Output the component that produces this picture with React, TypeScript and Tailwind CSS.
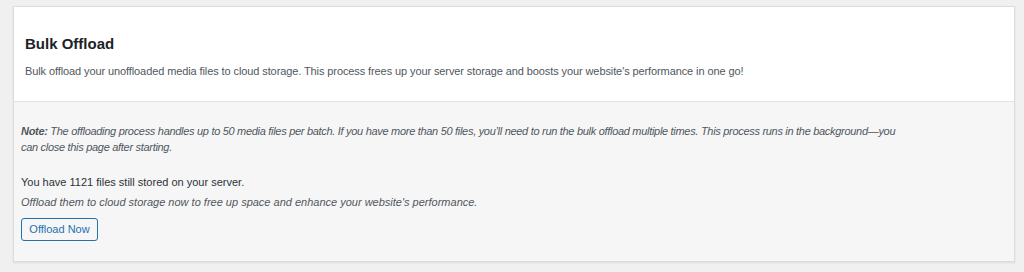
import React from "react";

export default function App() {
  return (
    <div
      className="w-[1024px] h-[272px] bg-[#f0f0f1] pt-[6px] pl-[13px] pr-[9px]"
      style={{ fontFamily: '"Liberation Sans", Arial, sans-serif' }}
    >
      <div className="w-[1002px] h-[256px] border border-[#dcdcde] shadow-[0_1px_2px_rgba(0,0,0,0.08)] flex flex-col">
        <div className="bg-white h-[95px] border-b border-[#e2e2e4] pl-[11px] pt-[27px]">
          <h2 className="text-[15px] font-bold text-[#1d2327] leading-[20px]">Bulk Offload</h2>
          <p className="text-[11px] tracking-[-0.1px] text-[#50575e] leading-[16px] mt-[9px]">
            Bulk offload your unoffloaded media files to cloud storage. This process frees up your server storage and boosts your website's performance in one go!
          </p>
        </div>
        <div className="flex-1 bg-[#f6f6f6] pl-[7px] pt-[21px]">
          <p className="w-[880px] text-[11px] tracking-[-0.3px] italic text-[#50575e] leading-[16px]">
            <b>Note:</b> The offloading process handles up to 50 media files per batch. If you have more than 50 files, you’ll need to run the bulk offload multiple times. This process runs in the background—you can close this page after starting.
          </p>
          <p className="text-[11px] text-[#2c3338] leading-[16px] mt-[19px]">
            You have 1121 files still stored on your server.
          </p>
          <p className="text-[11px] italic text-[#50575e] leading-[16px] mt-[4px]">
            Offload them to cloud storage now to free up space and enhance your website's performance.
          </p>
          <button className="mt-[8px] h-[23px] w-[77px] border border-[#2271b1] rounded-[3px] text-[11px] text-[#2271b1] bg-[#f6f6f6] leading-none">
            Offload Now
          </button>
        </div>
      </div>
    </div>
  );
}
